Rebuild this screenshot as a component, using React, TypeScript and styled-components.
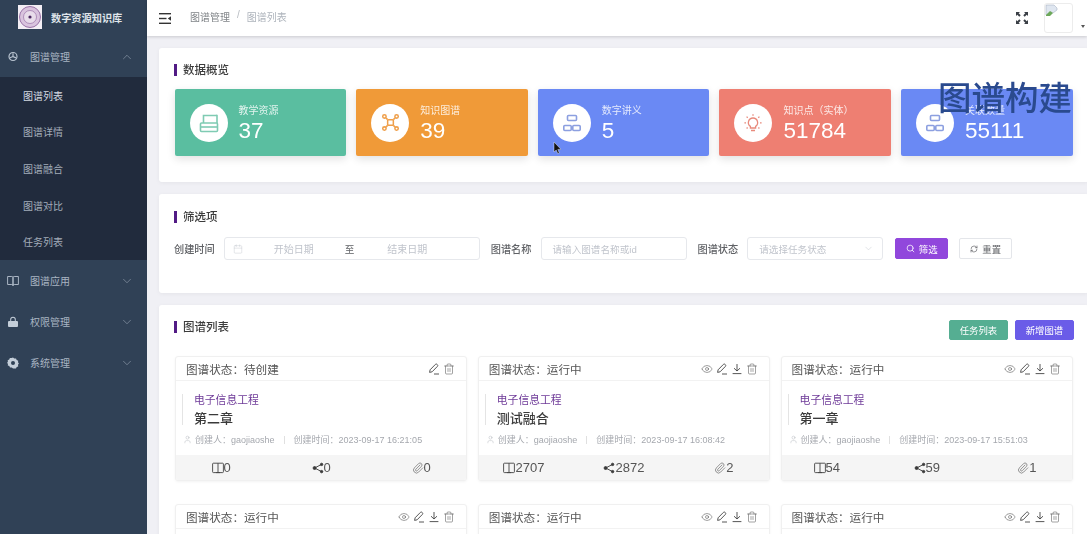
import React from "react";
import styled, { createGlobalStyle } from "styled-components";
import { ChevronDown, ChevronUp, Eye, Paperclip, Search, RefreshCw, Trash2, User, Calendar } from "lucide-react";

const GlobalStyle = createGlobalStyle`
  * { box-sizing: border-box; }
  html, body { margin: 0; height: 100%; overflow: hidden; }
  body {
    font-family: "Liberation Sans", "Noto Sans CJK SC", sans-serif;
    background: #f0f0f5;
  }
`;

const Page = styled.div`
  display: flex;
  position: relative;
  width: 1087px;
  height: 534px;
  overflow: hidden;
  filter: blur(0.35px);
`;

const Sidebar = styled.aside`
  flex: 0 0 147px;
  background: #304156;
  color: #bfcbd9;
`;

const Logo = styled.div`
  display: flex;
  align-items: center;
  height: 36px;
  padding: 0 0 2px 18px;
  gap: 9px;
  font-size: 10.2px;
  font-weight: 700;
  color: #dfe4ea;
  white-space: nowrap;
`;

const MenuItem = styled.div`
  display: flex;
  align-items: center;
  height: 41px;
  padding: 0 13px 0 7px;
  font-size: 10px;
  color: #a9b5c3;
  & > svg:first-child { flex: 0 0 auto; }
`;

const MenuLabel = styled.span`
  flex: 1;
  margin-left: 11px;
`;

const SubMenu = styled.div`
  background: #212b3d;
  height: 183px;
`;

const SubItem = styled.div<{ $active?: boolean }>`
  display: flex;
  align-items: center;
  height: 36.6px;
  padding-left: 23px;
  font-size: 10px;
  color: ${(p) => (p.$active ? "#d4dae2" : "#a3adba")};
`;

const Main = styled.div`
  flex: 1;
  min-width: 0;
`;

const Header = styled.header`
  display: flex;
  align-items: center;
  height: 36px;
  padding: 0 2px 0 12px;
  background: #fff;
  box-shadow: 0 1px 3px rgba(0, 0, 0, 0.16);
  position: relative;
`;

const Crumbs = styled.div`
  flex: 1;
  display: flex;
  margin-left: 19px;
  padding-bottom: 3px;
  font-size: 10px;
  color: #808488;
`;

const CrumbSep = styled.span`
  margin: 0 7px;
  color: #b8bcc2;
`;

const CrumbLast = styled.span`
  color: #adb3bb;
`;

const Avatar = styled.div`
  width: 29px;
  height: 30px;
  margin: 0 8px 0 15px;
  border: 1px solid #ececec;
  border-radius: 3px;
  background: #fff;
  overflow: hidden;
`;

const Caret = styled.span`
  width: 0;
  height: 0;
  margin-top: 16px;
  border-left: 2.5px solid transparent;
  border-right: 2.5px solid transparent;
  border-top: 3px solid #555;
`;

const Content = styled.div`
  padding: 12px 0 0 12px;
  width: 944px;
`;

const Panel = styled.section<{ $h: number; $top?: number }>`
  width: 930px;
  height: ${(p) => p.$h}px;
  margin-bottom: 12px;
  padding: ${(p) => p.$top || 15}px 16px 0;
  background: #fff;
  border-radius: 3px;
  box-shadow: 0 1px 4px rgba(0, 0, 0, 0.05);
`;

const TitleRow = styled.div`
  display: flex;
  align-items: center;
  justify-content: space-between;
  height: 14px;
`;

const Title = styled.h2`
  margin: 0 0 0 -1px;
  padding-left: 6px;
  border-left: 3px solid #521b85;
  font-size: 11.5px;
  line-height: 12px;
  font-weight: 500;
  color: #3c3c3c;
`;

const Stats = styled.div`
  display: flex;
  gap: 10px;
  margin: 12px 0 0 -0.4px;
`;

const Stat = styled.div<{ $bg: string }>`
  display: flex;
  align-items: center;
  flex: 0 0 171.6px;
  height: 67px;
  padding-left: 15px;
  gap: 11px;
  background: ${(p) => p.$bg};
  border-radius: 2px;
  box-shadow: 0 3px 8px rgba(0, 0, 0, 0.12);
  color: #fff;
`;

const StatIcon = styled.div`
  display: flex;
  align-items: center;
  justify-content: center;
  flex: 0 0 38px;
  height: 38px;
  border-radius: 50%;
  background: #fff;
`;

const StatText = styled.div`
  display: flex;
  flex-direction: column;
  margin-top: 3px;
`;

const StatLabel = styled.span`
  font-size: 10px;
  line-height: 13px;
  color: rgba(255, 255, 255, 0.82);
`;

const StatValue = styled.span`
  font-size: 22.5px;
  line-height: 27px;
`;

const FilterRow = styled.div`
  display: flex;
  align-items: center;
  height: 23px;
  margin: 13px 0 0 -1px;
  font-size: 10.2px;
  color: #606266;
`;

const FilterLabel = styled.label`
  margin-right: 9px;
  font-weight: 500;
  white-space: nowrap;
`;

const Field = styled.div<{ $w: number; $after?: number }>`
  display: flex;
  align-items: center;
  flex: 0 0 ${(p) => p.$w}px;
  height: 23px;
  margin-right: ${(p) => p.$after || 11}px;
  padding: 0 8px;
  border: 1px solid #e6e8ec;
  border-radius: 3px;
  font-size: 9.6px;
  color: #c0c4cc;
`;

const FieldCell = styled.span<{ $w: number }>`
  flex: 0 0 ${(p) => p.$w}px;
  text-align: center;
  font-size: 10px;
  white-space: nowrap;
`;

const FieldText = styled.span`
  flex: 1;
  padding-left: 3px;
  white-space: nowrap;
`;

const RangeTo = styled.span`
  color: #606266;
`;

const ActionButton = styled.button<{ $bg?: string; $w?: number; $h?: number }>`
  display: inline-flex;
  align-items: center;
  justify-content: center;
  gap: 4px;
  width: ${(p) => p.$w || 53}px;
  height: ${(p) => p.$h || 21}px;
  padding: 0;
  border: 1px solid ${(p) => p.$bg || "#e4e6ea"};
  border-radius: 2px;
  background: ${(p) => p.$bg || "#fff"};
  color: ${(p) => (p.$bg ? "#fff" : "#606266")};
  font: inherit;
  font-size: 9.4px;
`;

const FilterButtons = styled.div`
  display: flex;
  gap: 11px;
  margin-left: 1px;
`;

const ListButtons = styled.div`
  display: flex;
  gap: 7px;
  margin: 6px -1px 0 0;
`;

const Grid = styled.div`
  display: grid;
  grid-template-columns: repeat(3, 292.3px);
  column-gap: 10.5px;
  row-gap: 23px;
  margin-top: 22px;
`;

const Item = styled.article`
  border: 1px solid #f0f0f0;
  border-radius: 3px;
  overflow: hidden;
  background: #fff;
  box-shadow: 0 1px 3px rgba(0, 0, 0, 0.05);
`;

const ItemHead = styled.div`
  display: flex;
  align-items: center;
  justify-content: space-between;
  height: 24px;
  padding: 0 11px 0 10px;
  border-bottom: 1px solid #f2f2f2;
  font-size: 11.6px;
  color: #555;
`;

const ItemTools = styled.div`
  display: flex;
  gap: 3px;
  color: #444;
`;

const ItemBody = styled.div`
  height: 74px;
  padding: 13px 6px 0;
`;

const Heading = styled.div`
  padding-left: 11px;
  border-left: 1px solid #e4e4e4;
  height: 31px;
`;

const Major = styled.div`
  font-size: 10.8px;
  line-height: 13px;
  color: #6e3a98;
`;

const Chapter = styled.div`
  margin-top: 4px;
  font-size: 13px;
  line-height: 16px;
  font-weight: 500;
  color: #3a3a3a;
`;

const Meta = styled.div`
  display: flex;
  align-items: center;
  margin: 8px 0 0 1px;
  font-size: 9px;
  color: #a5a8ae;
  white-space: nowrap;
`;

const MetaName = styled.span`
  margin-left: 3px;
`;

const MetaSep = styled.span`
  width: 1px;
  height: 8px;
  margin: 0 9px;
  background: #e0e0e0;
`;

const ItemFoot = styled.div`
  display: flex;
  justify-content: center;
  height: 25px;
  background: #f5f5f5;
`;

const FootCell = styled.div`
  flex: 0 0 100px;
  display: flex;
  align-items: center;
  justify-content: center;
  font-size: 13px;
  color: #555;
`;

const Watermark = styled.div`
  position: absolute;
  left: 938px;
  top: 77px;
  font-size: 33.5px;
  line-height: 44px;
  font-weight: 500;
  color: #2a4a8e;
  white-space: nowrap;
`;

const Pointer = styled.svg`
  position: absolute;
  left: 553px;
  top: 142px;
`;

const SealLogo = () => (
  <svg width="24" height="24" viewBox="0 0 24 24">
    <rect width="24" height="24" fill="#f3eef5" />
    <circle cx="12" cy="12" r="10.5" fill="#d9c3de" stroke="#9a73a8" />
    <circle cx="12" cy="12" r="6.5" fill="#e8dcea" stroke="#9a73a8" strokeWidth="0.7" />
    <circle cx="12" cy="12" r="1.6" fill="#4d2a63" />
  </svg>
);

const PaletteIcon = () => (
  <svg width="12" height="12" viewBox="0 0 12 12" fill="none" stroke="#b7c2cf" strokeWidth="1.2">
    <circle cx="6" cy="5.5" r="4" />
    <path d="M6 2.2v3.3l3 1.4M3 6.8l3-1.3" />
  </svg>
);

const MenuBook = () => (
  <svg width="12" height="12" viewBox="0 0 12 12" fill="none" stroke="#b7c2cf" strokeWidth="0.9">
    <path d="M.6 1.5h4.2c.7 0 1.2.4 1.2 1v8c0-.6-.5-1-1.2-1H.6zM11.4 1.5H7.2c-.7 0-1.2.4-1.2 1v8c0-.6.5-1 1.2-1h4.2z" />
  </svg>
);

const LockIcon = () => (
  <svg width="12" height="12" viewBox="0 0 12 12" fill="#c4ced9">
    <path d="M3.2 5V3.6a2.8 2.8 0 0 1 5.6 0V5h-1V3.6a1.8 1.8 0 0 0-3.6 0V5z" />
    <rect x="1" y="5" width="10" height="6" rx="1" />
  </svg>
);

const GearIcon = () => (
  <svg width="12" height="12" viewBox="0 0 12 12">
    <path d="M6 .6l1.3 1 1.7-.2.7 1.5 1.5.8-.2 1.6.9 1.2-.9 1.3.2 1.6-1.5.7-.7 1.5-1.7-.2L6 11.4l-1.3-1-1.7.2-.7-1.5-1.5-.7.2-1.6L0 6l.9-1.2-.2-1.6 1.5-.8.7-1.5 1.7.2z" fill="#c4ced9" />
    <circle cx="6" cy="6" r="2" fill="#304156" />
  </svg>
);

const Hamburger = () => (
  <svg width="12" height="11" viewBox="0 0 12 11" fill="#333">
    <rect width="12" height="1.4" />
    <rect y="4.8" width="7.5" height="1.4" />
    <rect y="9.6" width="12" height="1.4" />
    <path d="M12 3.2v4.6L8.8 5.5z" />
  </svg>
);

const FullScreen = () => (
  <svg width="14" height="14" viewBox="0 0 14 14" fill="#3a3f46">
    <path d="M1 1h4L3.7 2.3l2 2-1.4 1.4-2-2L1 5zM13 1v4l-1.3-1.3-2 2-1.4-1.4 2-2L9 1zM1 13V9l1.3 1.3 2-2 1.4 1.4-2 2L5 13zM13 13H9l1.3-1.3-2-2 1.4-1.4 2 2L13 9z" />
  </svg>
);

const BrokenImage = () => (
  <svg width="14" height="14" viewBox="0 0 14 14">
    <path d="M1 1h8l3 3v2L8 9 6 8 1 11z" fill="#dfe6f0" stroke="#a9b4c4" strokeWidth="0.6" />
    <path d="M1 11l4-4 3 2-3 3H1z" fill="#6da85a" />
  </svg>
);

const PrinterIcon = () => (
  <svg width="20" height="20" viewBox="0 0 20 20" fill="none" stroke="#7fcbb3" strokeWidth="1.6">
    <path d="M4.5 10V2.5h12.5a1 1 0 0 1 1 0V10" />
    <rect x="1.5" y="10" width="17" height="8.5" rx="1" />
    <path d="M1.5 14h17" />
  </svg>
);

const NetworkIcon = () => (
  <svg width="19" height="19" viewBox="0 0 20 20" fill="none" stroke="#ef9f4a" strokeWidth="1.6">
    <rect x="7" y="7" width="6" height="6" rx="1" />
    <circle cx="3.6" cy="3.6" r="1.8" />
    <circle cx="16.4" cy="3.6" r="1.8" />
    <circle cx="3.6" cy="16.4" r="1.8" />
    <circle cx="16.4" cy="16.4" r="1.8" />
    <path d="M5 5l2 2M15 5l-2 2M5 15l2-2M15 15l-2-2" />
  </svg>
);

const BlocksIcon = () => (
  <svg width="18" height="18" viewBox="0 0 18 18" fill="none" stroke="#8c9fe0" strokeWidth="1.6">
    <rect x="4.5" y="1.5" width="9" height="5" rx="1" />
    <rect x="0.8" y="11.5" width="7.4" height="5" rx="1" />
    <rect x="9.8" y="11.5" width="7.4" height="5" rx="1" />
  </svg>
);

const BulbIcon = () => (
  <svg width="20" height="20" viewBox="0 0 20 20" fill="none" stroke="#e88a7c" strokeWidth="1.3">
    <path d="M10 5a4.6 4.6 0 0 0-2.6 8.4V15h5.2v-1.6A4.6 4.6 0 0 0 10 5zM8 17.5h4" />
    <path d="M10 1.2v1.6M3.6 3.6l1.1 1.1M16.4 3.6l-1.1 1.1M1.4 9.8H3M17 9.8h1.6M3.6 15.5l1-1M16.4 15.5l-1-1" />
  </svg>
);

const EditIcon = () => (
  <svg width="12" height="12" viewBox="0 0 12 12" fill="none" stroke="currentColor" strokeWidth="0.9">
    <path d="M1.6 9.4l.5-2.6L7.4 1.4c.5-.5 1.2-.5 1.7 0l.3.3c.5.5.5 1.2 0 1.7L4.1 8.8z" />
    <path d="M6 11h5" />
  </svg>
);

const DownloadIcon = () => (
  <svg width="12" height="12" viewBox="0 0 12 12" fill="none" stroke="currentColor" strokeWidth="0.9">
    <path d="M6 1v7M3 5.2L6 8l3-2.8M1.6 10.6h8.8" />
  </svg>
);

const BookIcon = () => (
  <svg width="12" height="12" viewBox="0 0 12 12" fill="none" stroke="#444" strokeWidth="0.9">
    <rect x="0.6" y="1.2" width="10.8" height="9.4" rx="0.8" />
    <path d="M6 1.2v9.4M4 10.6h4" />
  </svg>
);

const ShareIcon = () => (
  <svg width="12" height="12" viewBox="0 0 12 12" fill="#3a3a3a" stroke="#3a3a3a" strokeWidth="0.9">
    <circle cx="2.6" cy="6" r="1.5" />
    <circle cx="9.6" cy="2.4" r="1.2" />
    <circle cx="9.6" cy="9.6" r="1.2" />
    <path d="M2.6 6l7-3.6M2.6 6l7 3.6" />
  </svg>
);

const statCards = [
  { label: "教学资源", value: "37", bg: "#5abea0", icon: <PrinterIcon /> },
  { label: "知识图谱", value: "39", bg: "#f09a38", icon: <NetworkIcon /> },
  { label: "数字讲义", value: "5", bg: "#6a89f4", icon: <BlocksIcon /> },
  { label: "知识点（实体）", value: "51784", bg: "#ee7f72", icon: <BulbIcon /> },
  { label: "关联数量", value: "55111", bg: "#6a89f4", icon: <BlocksIcon /> },
];

const items = [
  { status: "待创建", chapter: "第二章", time: "2023-09-17 16:21:05", counts: [0, 0, 0], idle: true },
  { status: "运行中", chapter: "测试融合", time: "2023-09-17 16:08:42", counts: [2707, 2872, 2] },
  { status: "运行中", chapter: "第一章", time: "2023-09-17 15:51:03", counts: [54, 59, 1] },
  { status: "运行中", chapter: "第一章", time: "2023-09-17 15:40:18", counts: [0, 0, 0] },
  { status: "运行中", chapter: "第一章", time: "2023-09-17 15:32:11", counts: [0, 0, 0] },
  { status: "运行中", chapter: "第一章", time: "2023-09-17 15:20:46", counts: [0, 0, 0] },
];

const App = () => {
  return (
    <Page>
      <GlobalStyle />
      <Sidebar>
        <Logo>
          <SealLogo />
          数字资源知识库
        </Logo>
        <MenuItem>
          <PaletteIcon />
          <MenuLabel>图谱管理</MenuLabel>
          <ChevronUp size={14} strokeWidth={0.9} />
        </MenuItem>
        <SubMenu>
          <SubItem $active>图谱列表</SubItem>
          <SubItem>图谱详情</SubItem>
          <SubItem>图谱融合</SubItem>
          <SubItem>图谱对比</SubItem>
          <SubItem>任务列表</SubItem>
        </SubMenu>
        <MenuItem>
          <MenuBook />
          <MenuLabel>图谱应用</MenuLabel>
          <ChevronDown size={14} strokeWidth={0.9} />
        </MenuItem>
        <MenuItem>
          <LockIcon />
          <MenuLabel>权限管理</MenuLabel>
          <ChevronDown size={14} strokeWidth={0.9} />
        </MenuItem>
        <MenuItem>
          <GearIcon />
          <MenuLabel>系统管理</MenuLabel>
          <ChevronDown size={14} strokeWidth={0.9} />
        </MenuItem>
      </Sidebar>
      <Main>
        <Header>
          <Hamburger />
          <Crumbs>
            图谱管理
            <CrumbSep>/</CrumbSep>
            <CrumbLast>图谱列表</CrumbLast>
          </Crumbs>
          <FullScreen />
          <Avatar>
            <BrokenImage />
          </Avatar>
          <Caret />
        </Header>
        <Content>
          <Panel $h={134}>
            <TitleRow>
              <Title>数据概览</Title>
            </TitleRow>
            <Stats>
              {statCards.map((s) => (
                <Stat key={s.label} $bg={s.bg}>
                  <StatIcon>{s.icon}</StatIcon>
                  <StatText>
                    <StatLabel>{s.label}</StatLabel>
                    <StatValue>{s.value}</StatValue>
                  </StatText>
                </Stat>
              ))}
            </Stats>
          </Panel>
          <Panel $h={99} $top={16}>
            <TitleRow>
              <Title>筛选项</Title>
            </TitleRow>
            <FilterRow>
              <FilterLabel>创建时间</FilterLabel>
              <Field $w={256}>
                <Calendar size={10} strokeWidth={1} />
                <FieldCell $w={102}>开始日期</FieldCell>
                <RangeTo>至</RangeTo>
                <FieldCell $w={106}>结束日期</FieldCell>
              </Field>
              <FilterLabel>图谱名称</FilterLabel>
              <Field $w={146}>
                <FieldText>请输入图谱名称或id</FieldText>
              </Field>
              <FilterLabel>图谱状态</FilterLabel>
              <Field $w={136}>
                <FieldText>请选择任务状态</FieldText>
                <ChevronDown size={11} strokeWidth={1} />
              </Field>
              <FilterButtons>
                <ActionButton $bg="#9147dc">
                  <Search size={9} />
                  筛选
                </ActionButton>
                <ActionButton>
                  <RefreshCw size={8} />
                  重置
                </ActionButton>
              </FilterButtons>
            </FilterRow>
          </Panel>
          <Panel $h={260}>
            <TitleRow>
              <Title>图谱列表</Title>
              <ListButtons>
                <ActionButton $bg="#55ae92" $w={59} $h={20}>任务列表</ActionButton>
                <ActionButton $bg="#6a5ce8" $w={59} $h={20}>新增图谱</ActionButton>
              </ListButtons>
            </TitleRow>
            <Grid>
              {items.map((it, i) => (
                <Item key={i}>
                  <ItemHead>
                    图谱状态：{it.status}
                    <ItemTools>
                      {!it.idle && <Eye size={12} strokeWidth={1} />}
                      <EditIcon />
                      {!it.idle && <DownloadIcon />}
                      <Trash2 size={12} strokeWidth={1} />
                    </ItemTools>
                  </ItemHead>
                  <ItemBody>
                    <Heading>
                      <Major>电子信息工程</Major>
                      <Chapter>{it.chapter}</Chapter>
                    </Heading>
                    <Meta>
                      <User size={9} strokeWidth={1} />
                      <MetaName>创建人：gaojiaoshe</MetaName>
                      <MetaSep />
                      创建时间：{it.time}
                    </Meta>
                  </ItemBody>
                  <ItemFoot>
                    <FootCell>
                      <BookIcon />
                      {it.counts[0]}
                    </FootCell>
                    <FootCell>
                      <ShareIcon />
                      {it.counts[1]}
                    </FootCell>
                    <FootCell>
                      <Paperclip size={12} strokeWidth={1.2} />
                      {it.counts[2]}
                    </FootCell>
                  </ItemFoot>
                </Item>
              ))}
            </Grid>
          </Panel>
        </Content>
      </Main>
      <Watermark>图谱构建</Watermark>
      <Pointer width="8" height="13" viewBox="0 0 8 13">
        <path d="M1 0v10l2.2-2 1.6 3.6 1.5-.7L4.8 7.4H8z" fill="#111" stroke="#fff" strokeWidth="0.4" />
      </Pointer>
    </Page>
  );
};

export default App;
